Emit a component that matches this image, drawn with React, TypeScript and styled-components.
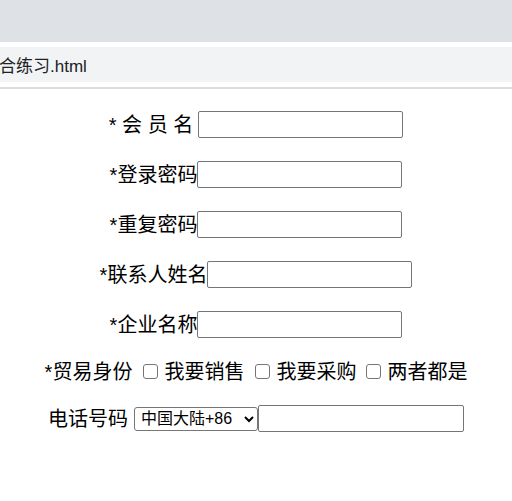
import * as React from 'react'
import styled, {createGlobalStyle} from 'styled-components'

const GlobalStyle = createGlobalStyle`
  html, body {
    margin: 0;
    padding: 0;
    background: #fff;
  }
  body {
    font-family: "Liberation Sans", "Noto Sans CJK SC", sans-serif;
    color: #000;
  }
`

const StyledWindowTop = styled.div`
  height: 42px;
  background: #dee1e6;
`

const StyledAddressBar = styled.div`
  margin-top: 5px;
  height: 35px;
  background: #f1f3f4;
  display: flex;
  align-items: center;
  font-size: 17px;
  color: #202124;
  overflow: hidden;
  white-space: nowrap;

  span {
    margin-left: -1px;
    margin-top: -1px;
  }
`

const StyledDivider = styled.div`
  margin-top: 5px;
  height: 2px;
  background: #dadce0;
`

const StyledForm = styled.form`
  display: flex;
  flex-direction: column;
  gap: 23px;
  padding-top: 22px;
`

const StyledFormRow = styled.div<{$height?: number}>`
  display: flex;
  justify-content: center;
  align-items: center;
  height: ${(p) => p.$height ?? 27}px;
  font-size: 20px;
  line-height: 1;
  white-space: pre;
`

const StyledLabel = styled.span<{$gap?: number}>`
  margin-right: ${(p) => p.$gap ?? 0}px;
`

const StyledTextInput = styled.input<{$width?: number}>`
  box-sizing: border-box;
  width: ${(p) => p.$width ?? 205}px;
  height: 27px;
  margin: 0;
  padding: 1px 3px;
  border: 1px solid #767676;
  border-radius: 2px;
  background: #fff;
  font-size: 16px;
  font-family: "Liberation Sans", "Noto Sans CJK SC", sans-serif;
`

const StyledCheckItem = styled.label<{$offset: number}>`
  display: flex;
  align-items: center;
  margin-left: ${(p) => p.$offset}px;
`

const StyledCheckbox = styled.input`
  appearance: none;
  box-sizing: border-box;
  width: 15px;
  height: 15px;
  margin: 0 6px 0 0;
  border: 1px solid #767676;
  border-radius: 3px;
  background: #fff;
`

const StyledSelect = styled.select`
  box-sizing: border-box;
  width: 124px;
  height: 24px;
  margin: 0;
  padding: 0 2px;
  border: 1px solid #767676;
  border-radius: 3px;
  background: #fff;
  color: #000;
  font-size: 16px;
  font-family: "Liberation Sans", "Noto Sans CJK SC", sans-serif;
`

const roles = ['我要销售', '我要采购', '两者都是']

export default function App() {
  return (
    <>
      <GlobalStyle />
      <StyledWindowTop />
      <StyledAddressBar>
        <span>合练习.html</span>
      </StyledAddressBar>
      <StyledDivider />
      <StyledForm onSubmit={(e) => e.preventDefault()}>
        <StyledFormRow>
          <StyledLabel $gap={5}>* 会 员 名</StyledLabel>
          <StyledTextInput type="text" />
        </StyledFormRow>
        <StyledFormRow>
          <StyledLabel>*登录密码</StyledLabel>
          <StyledTextInput type="password" />
        </StyledFormRow>
        <StyledFormRow>
          <StyledLabel>*重复密码</StyledLabel>
          <StyledTextInput type="password" />
        </StyledFormRow>
        <StyledFormRow>
          <StyledLabel>*联系人姓名</StyledLabel>
          <StyledTextInput type="text" />
        </StyledFormRow>
        <StyledFormRow>
          <StyledLabel>*企业名称</StyledLabel>
          <StyledTextInput type="text" />
        </StyledFormRow>
        <StyledFormRow $height={21}>
          <StyledLabel>*贸易身份</StyledLabel>
          {roles.map((role, i) => (
            <StyledCheckItem key={role} $offset={i === 2 ? 10 : 11}>
              <StyledCheckbox type="checkbox" name="role" />
              {role}
            </StyledCheckItem>
          ))}
        </StyledFormRow>
        <StyledFormRow>
          <StyledLabel $gap={6}>电话号码</StyledLabel>
          <StyledSelect defaultValue="cn">
            <option value="cn">中国大陆+86</option>
            <option value="hk">中国香港+852</option>
            <option value="tw">中国台湾+886</option>
          </StyledSelect>
          <StyledTextInput type="tel" $width={206} />
        </StyledFormRow>
      </StyledForm>
    </>
  )
}
